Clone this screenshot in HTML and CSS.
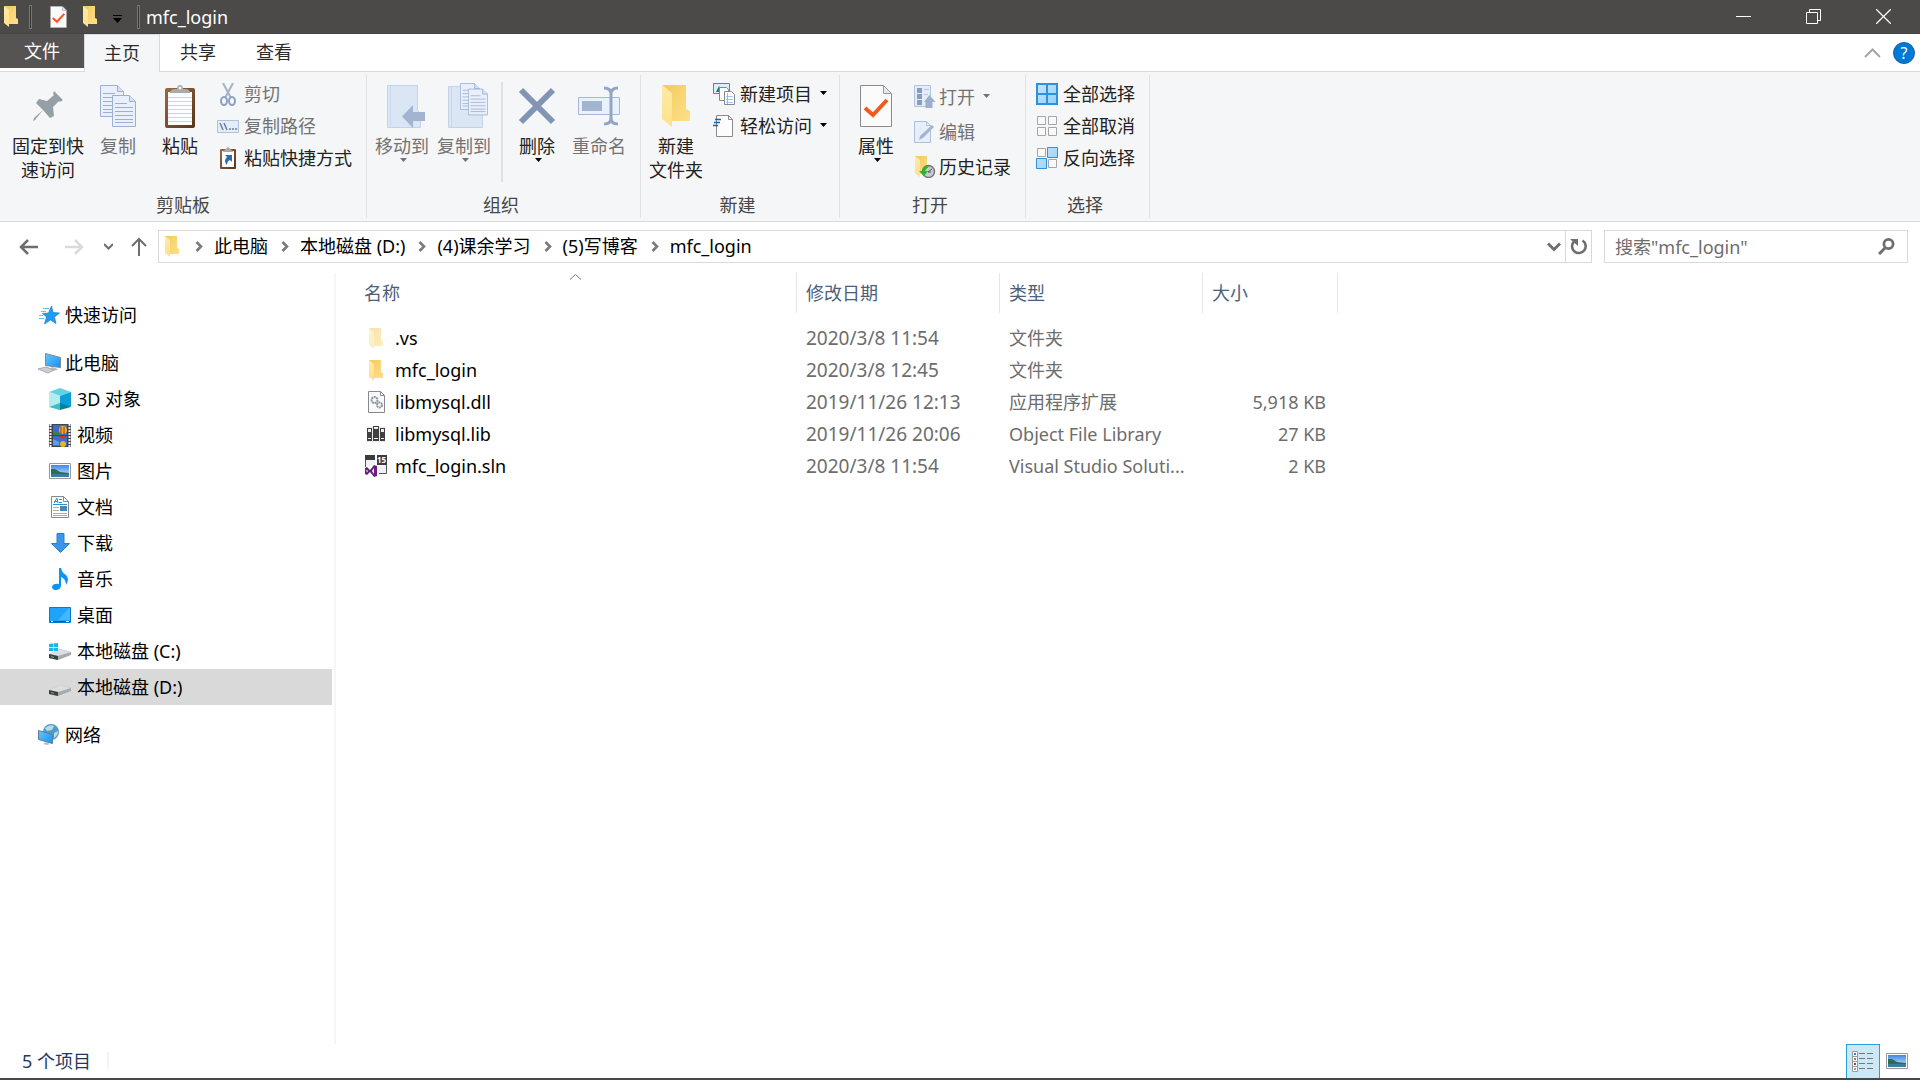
FILE: index.html
```html
<!DOCTYPE html>
<html lang="zh-CN">
<head>
<meta charset="utf-8">
<title>mfc_login</title>
<link rel="stylesheet" href="styles.css">
</head>
<body>
<svg class="defs" aria-hidden="true">
  <defs>
    <linearGradient id="gold" x1="0" y1="0" x2="1" y2="1"><stop offset="0" stop-color="#f0cb60"/><stop offset="1" stop-color="#ffe089"/></linearGradient>
    <linearGradient id="flap" x1="0" y1="0" x2="0" y2="1"><stop offset="0" stop-color="#ffe9a6"/><stop offset="1" stop-color="#ffe287"/></linearGradient>
    <linearGradient id="wood" x1="0" y1="0" x2="1" y2="1"><stop offset="0" stop-color="#9a6a3e"/><stop offset="1" stop-color="#59351a"/></linearGradient>
    <linearGradient id="sky" x1="0" y1="0" x2="0" y2="1"><stop offset="0" stop-color="#3f87e8"/><stop offset="1" stop-color="#d4ecf8"/></linearGradient>
    <linearGradient id="blue" x1="0" y1="0" x2="1" y2="1"><stop offset="0" stop-color="#6cc6ff"/><stop offset="1" stop-color="#0f93f5"/></linearGradient>
    <linearGradient id="cell" x1="0" y1="0" x2="1" y2="1"><stop offset="0" stop-color="#c5e6ff"/><stop offset="1" stop-color="#94d0fa"/></linearGradient>
  </defs>
  <symbol id="folder" viewBox="0 0 14 21"><path d="M0 0h12v12l2 1v5H4z" fill="url(#gold)"/><path d="M0 0l5 4v17l-5-4z" fill="url(#flap)"/></symbol>
  <symbol id="chev" viewBox="0 0 8 11"><path d="M1.500 1l4.500 4.500L1.500 10" fill="none" stroke="#7a7a7a" stroke-width="2.600"/></symbol>
  <symbol id="down" viewBox="0 0 7 4"><path d="M0 0h7L3.500 4z" fill="currentColor"/></symbol>
  <symbol id="check" viewBox="0 0 32 42"><path d="M.5.5h23l8 8v33H.5z" fill="#fbfbfb" stroke="#8a8a8a"/><path d="M23.500.5v8h8z" fill="#e6e6e6" stroke="#9a9a9a"/><path d="M5 23l8 7 14-15" fill="none" stroke="#f4591b" stroke-width="4"/></symbol>
  <symbol id="page" viewBox="0 0 24 32"><path d="M.5.5h17l6 6v25H.5z" fill="#e9f0fb" stroke="#9db0d3"/><path d="M17.500.5v6h6" fill="#d5e0f1" stroke="#9db0d3"/><path d="M3 8.500h12M3 12.500h18M3 16.500h18M3 20.500h18M3 24.500h18M3 27.500h18" stroke="#9fb0cf"/></symbol>
  <symbol id="photo" viewBox="0 0 22 16"><path d="M.5.5h21v15H.5z" fill="#fff" stroke="#999"/><path d="M2 2h18v12H2z" fill="url(#sky)"/><path d="M2 6l4 0 5 3 9 1v1H2z" fill="#2f6b51"/><path d="M2 11h18v3H2z" fill="#3d7ba0"/></symbol>
  <symbol id="drive" viewBox="0 0 22 11"><path d="M0 5L11 0l11 3v3L9 11 0 9z" fill="#a8a9ab"/><path d="M0 5L11 0l11 3-13 4z" fill="#dcdddf"/><path d="M0 5l9 2v4L0 9z" fill="#3d4043"/><path d="M2 7.500l3 1" stroke="#56c35b"/></symbol>
</svg>

<header class="titlebar">
  <svg class="t-folder" width="14" height="21"><use href="#folder"/></svg>
  <span class="t-sep"></span>
  <button class="plain t-check" aria-label="属性"><svg width="17" height="22"><use href="#check"/></svg></button>
  <button class="plain t-new" aria-label="新建文件夹"><svg width="14" height="21"><use href="#folder"/></svg></button>
  <button class="plain t-more" aria-label="自定义快速访问工具栏"><svg width="9" height="8"><path d="M0 .5h9" stroke="#000"/><path d="M0 3h9L4.500 8z" fill="#000"/></svg></button>
  <span class="t-sep"></span>
  <h1 class="title">mfc_login</h1>
  <button class="plain win" aria-label="最小化"><svg width="15" height="15"><path d="M0 7.500h15" stroke="#fff"/></svg></button>
  <button class="plain win" aria-label="还原"><svg width="15" height="15"><path d="M.5 3.500h11v11H.5zM3.500 3V.5h11v11H12" fill="none" stroke="#fff"/></svg></button>
  <button class="plain win" aria-label="关闭"><svg width="15" height="15"><path d="M0 0l15 15M15 0L0 15" stroke="#fff" stroke-width="1.300"/></svg></button>
</header>

<nav class="tabs">
  <button class="plain tab file">文件</button>
  <button class="plain tab active">主页</button>
  <button class="plain tab">共享</button>
  <button class="plain tab">查看</button>
  <span class="grow"></span>
  <button class="plain" aria-label="折叠功能区"><svg width="17" height="10"><path d="M1 9l7.500-7.500L16 9" fill="none" stroke="#a5a5a5" stroke-width="2"/></svg></button>
  <button class="plain help" aria-label="帮助">?</button>
</nav>

<section class="ribbon">
  <div class="group g-clip">
    <div class="tools">
      <button class="plain big w80"><span class="pic"><svg width="30" height="30"><path d="M21 0l9 9-3 2-1-1-6 6 1 9-4 2-7-8-8 10-2 1 1-3 9-8-7-7 3-4 8 2 7-6-1-1z" fill="#95a0a6"/></svg></span>固定到快<br>速访问</button>
      <button class="plain big w60 off"><span class="pic"><svg width="36" height="42"><use href="#page" width="24" height="32"/><use href="#page" x="12" y="10" width="24" height="32"/></svg></span>复制</button>
      <button class="plain big w64"><span class="pic"><svg width="30" height="43"><rect y="3" width="30" height="40" rx="2" fill="url(#wood)"/><path d="M3 7h24v33H3z" fill="#fbfdff"/><path d="M3 12.500h24M3 16.500h24M3 20.500h24M3 24.500h24M3 28.500h24M3 32.500h24M3 36.500h24" stroke="#b7ddf2"/><path d="M5 8q0-4 5-4h2q0-4 3-4t3 4h2q5 0 5 4z" fill="#aaa"/><circle cx="15" cy="3" r="1.500" fill="#eee"/></svg></span>粘贴</button>
      <div class="stack">
        <button class="plain small off"><span class="ico"><svg width="16" height="23"><path d="M3 0l8 15M13 0L5 15" stroke="#a3b1ca" stroke-width="2"/><ellipse cx="4" cy="18" rx="3" ry="4" fill="none" stroke="#8d9fc3" stroke-width="2"/><ellipse cx="12" cy="18" rx="3" ry="4" fill="none" stroke="#8d9fc3" stroke-width="2"/></svg></span>剪切</button>
        <button class="plain small off"><span class="ico"><svg width="22" height="13"><path d="M.5.5h21v12H.5z" fill="#e3ecf9" stroke="#afc0dd"/><path d="M3 3l3 7M7 3l3 7M12 9h2M15 9h2M18 9h2" stroke="#6c7f9d" stroke-width="1.500"/></svg></span>复制路径</button>
        <button class="plain small"><span class="ico"><svg width="16" height="22"><rect y="2" width="16" height="20" rx="1" fill="url(#wood)"/><path d="M2 4h12v16H2z" fill="#fff"/><path d="M3 5q1-2 3-3 2-4 4 0 2 1 3 3z" fill="#aaa"/><path d="M5 8h7v7l-2-2q-3 1-3 5-4-4 0-8z" fill="#2e69ac"/></svg></span>粘贴快捷方式</button>
      </div>
    </div>
    <h2>剪贴板</h2>
  </div>

  <div class="group g-org">
    <div class="tools">
      <button class="plain big w62 off"><span class="pic"><svg width="40" height="43"><path d="M1.500.5h30v25l3 3v14h-33z" fill="#dbe6f5" stroke="#c5d3ea"/><path d="M4.500 1v41" stroke="#c9d7ec"/><path d="M16 31.500L27 20v7h12v9H27v7z" fill="#a3b4d0"/></svg></span>移动到<svg class="drop" width="7" height="4"><use href="#down"/></svg></button>
      <button class="plain big w62 off"><span class="pic"><svg width="42" height="46"><path d="M1.500 3.500h28v24h6v17h-34z" fill="#dbe6f5" stroke="#c5d3ea"/><path d="M4.500 4v40" stroke="#c9d7ec"/><use href="#page" x="13" y="0" width="20" height="27"/><use href="#page" x="21" y="5" width="20" height="28"/></svg></span>复制到<svg class="drop" width="7" height="4"><use href="#down"/></svg></button>
      <span class="divider"></span>
      <button class="plain big w60"><span class="pic"><svg width="38" height="38"><path d="M3 3l32 32M35 3L3 35" stroke="#8295b5" stroke-width="6"/></svg></span>删除<svg class="drop" width="7" height="4"><use href="#down"/></svg></button>
      <button class="plain big w64 off"><span class="pic"><svg width="42" height="40"><path d="M.5 11.500h41v17H.5z" fill="#e9f1fc" stroke="#a7b9da"/><path d="M4 15h20v10H4z" fill="#a3b4d0"/><path d="M26 2q7 0 7 6 0-6 7-6M33 7v26M26 38q7 0 7-6 0 6 7 6" fill="none" stroke="#94a5c3" stroke-width="3"/></svg></span>重命名</button>
    </div>
    <h2>组织</h2>
  </div>

  <div class="group g-new">
    <div class="tools">
      <button class="plain big w62"><span class="pic"><svg width="28" height="42"><use href="#folder"/></svg></span>新建<br>文件夹</button>
      <div class="stack">
        <button class="plain small"><span class="ico"><svg width="22" height="22"><path d="M.5.5h16v10H.5z" fill="#d8f0fa" stroke="#438db0"/><path d="M3 9l3-6 3 6z" fill="#34705c"/><path d="M6.500 4.500h7l2 2v11h-9z" fill="#fff" stroke="#888"/><path d="M11.500 8.500h7l3 3v10h-10z" fill="#fff" stroke="#888"/><path d="M13 13.500h7M13 16.500h7M13 19.500h7" stroke="#a7c5ee"/><path d="M14.500 10v11" stroke="#f09c9c"/></svg></span>新建项目<svg class="side" width="7" height="4"><use href="#down"/></svg></button>
        <button class="plain small"><span class="ico"><svg width="22" height="23"><path d="M3.500.5h12l4 4v17h-16z" fill="#fcfcfc" stroke="#8a8a8a"/><path d="M15.500.5v4h4" fill="none" stroke="#8a8a8a"/><path d="M2 4.500h6M1 7.500h6M0 10.500h5" stroke="#1c62a8" stroke-width="1.500"/></svg></span>轻松访问<svg class="side" width="7" height="4"><use href="#down"/></svg></button>
      </div>
    </div>
    <h2>新建</h2>
  </div>

  <div class="group g-open">
    <div class="tools">
      <button class="plain big w62"><span class="pic"><svg width="32" height="42"><use href="#check"/></svg></span>属性<svg class="drop" width="7" height="4"><use href="#down"/></svg></button>
      <div class="stack tall">
        <button class="plain small off"><span class="ico"><svg width="22" height="23"><path d="M.5.5h16v21H.5z" fill="#e3ecf9" stroke="#b3c3de"/><path d="M3 3h5v5H3zM3 9h5v5H3zM3 15h5v5H3z" fill="#8a9bbb"/><path d="M10 4.500h5M10 9.500h4" stroke="#b9c8e0"/><path d="M15.500 10l6 7h-3v6h-7v-6H10z" fill="#9dafce"/></svg></span>打开<svg class="side" width="7" height="4"><use href="#down"/></svg></button>
        <button class="plain small off"><span class="ico"><svg width="22" height="22"><path d="M.5.5h12l4 4v17H.5z" fill="#e6eefa" stroke="#afc0dd"/><path d="M12.500.5v4h4" fill="none" stroke="#afc0dd"/><path d="M5 19l1-4L18 4l2 2L9 17z" fill="#a3b4d0"/></svg></span>编辑</button>
        <button class="plain small"><span class="ico"><svg width="22" height="22"><use href="#folder" x="1" width="14" height="21"/><circle cx="14.500" cy="15.500" r="6" fill="#c7cbcd" stroke="#777" stroke-width="1.500"/><path d="M14 16l4-3M14 16h3" stroke="#555"/><path d="M16 10q-7-1-8 5H5l5 5 4-5h-3q1-3 5-5z" fill="#2bb52b"/></svg></span>历史记录</button>
      </div>
    </div>
    <h2>打开</h2>
  </div>

  <div class="group g-sel">
    <div class="tools">
      <div class="stack">
        <button class="plain small"><span class="ico"><svg width="22" height="22"><path d="M1 1h20v20H1z" fill="url(#cell)" stroke="#2d91e0" stroke-width="2"/><path d="M11 0v22M0 11h22" stroke="#2d91e0" stroke-width="2"/></svg></span>全部选择</button>
        <button class="plain small"><span class="ico"><svg width="22" height="22"><path d="M1.500 1.500h8v8h-8zM12.500 1.500h8v8h-8zM1.500 12.500h8v8h-8zM12.500 12.500h8v8h-8z" fill="#fafafa" stroke="#a6a6a6"/></svg></span>全部取消</button>
        <button class="plain small"><span class="ico"><svg width="22" height="22"><path d="M1.500 1.500h8v8h-8zM12.500 12.500h8v8h-8z" fill="#fafafa" stroke="#a6a6a6"/><path d="M11.500.5h10v10h-10zM.5 11.500h10v10H.5z" fill="url(#cell)" stroke="#2d91e0"/></svg></span>反向选择</button>
      </div>
    </div>
    <h2>选择</h2>
  </div>
</section>

<div class="navbar">
  <div class="arrows">
    <button class="plain n-back" aria-label="后退"><svg width="19" height="16"><path d="M19 8H2M9 1L2 8l7 7" fill="none" stroke="#6e6e6e" stroke-width="2.500"/></svg></button>
    <button class="plain n-fwd" aria-label="前进"><svg width="19" height="16"><path d="M0 8h17M10 1l7 7-7 7" fill="none" stroke="#dadada" stroke-width="2.500"/></svg></button>
    <button class="plain n-hist" aria-label="最近浏览的位置"><svg width="9" height="7"><path d="M0 1l4.500 4.500L9 1" fill="none" stroke="#6e6e6e" stroke-width="2"/></svg></button>
    <button class="plain" aria-label="上移"><svg width="16" height="19"><path d="M8 19V2M1 9l7-7 7 7" fill="none" stroke="#6e6e6e" stroke-width="2"/></svg></button>
  </div>
  <div class="address">
    <svg class="a-folder" width="14" height="21"><use href="#folder"/></svg>
    <svg class="chev" width="8" height="11"><use href="#chev"/></svg><a href="#pc">此电脑</a>
    <svg class="chev" width="8" height="11"><use href="#chev"/></svg><a href="#d">本地磁盘 (D:)</a>
    <svg class="chev" width="8" height="11"><use href="#chev"/></svg><a href="#study">(4)课余学习</a>
    <svg class="chev" width="8" height="11"><use href="#chev"/></svg><a href="#blog">(5)写博客</a>
    <svg class="chev" width="8" height="11"><use href="#chev"/></svg><a href="#login">mfc_login</a>
    <span class="grow"></span>
    <button class="plain a-drop" aria-label="历史位置"><svg width="14" height="10"><path d="M1 1.500l6 6 6-6" fill="none" stroke="#6e6e6e" stroke-width="3"/></svg></button>
    <button class="plain a-ref" aria-label="刷新"><svg width="17" height="18"><path d="M12.500 2.500a6.800 6.800 0 1 1-8.500 1" fill="none" stroke="#6e6e6e" stroke-width="2.600"/><path d="M0 1h8v7z" fill="#6e6e6e"/></svg></button>
  </div>
  <form class="search">
    <input type="search" aria-label="搜索" placeholder='搜索"mfc_login"'>
    <button class="plain" type="button" aria-label="搜索"><svg width="17" height="17"><circle cx="10.500" cy="6" r="4.600" fill="none" stroke="#6e6e6e" stroke-width="2.800"/><path d="M7.500 9.500l-6.500 6.500" stroke="#6e6e6e" stroke-width="3"/></svg></button>
  </form>
</div>

<main class="body">
  <nav class="sidebar">
    <ul>
      <li><a href="#quick"><span class="ico"><svg width="22" height="18"><path d="M13.500 0l1.500 6.500 6.500.5-5 4 1.500 6.500-5.500-3.500-6 4 2-7-4-3.500 6-.5z" fill="#1f9bf2" stroke="#1c7fc8" stroke-width=".7"/><path d="M5 2.500h6M3 5.500h5M1 9.500h4M1 12.500h5" stroke="#6fbdec"/></svg></span>快速访问</a></li>
    </ul>
    <ul>
      <li><a href="#pc"><span class="ico"><svg width="23" height="21"><path d="M7.500.5l15 4v10l-15-2z" fill="url(#blue)" stroke="#7b8a93"/><path d="M14 14l4 1 2 2-6 1-4-1z" fill="#b9bdc1"/><path d="M0 16l8-2 8 3-6 3z" fill="#c9ced3" stroke="#a6adb3"/></svg></span>此电脑</a>
        <ul class="sub">
          <li><a href="#o3d"><span class="ico"><svg width="22" height="22"><path d="M0 4l11-4 11 4-11 4z" fill="#62d3e4"/><path d="M0 4l11 4v9L0 19z" fill="#b5ecee"/><path d="M22 4L11 8v9l11 2z" fill="#0b9ed8"/><path d="M0 19l11-4v7z" fill="#35bfc9"/><path d="M22 19l-11-4v7z" fill="#067f99"/></svg></span>3D 对象</a></li>
          <li><a href="#video"><span class="ico"><svg width="22" height="23"><path d="M0 0h22v23H0z" fill="#444"/><path d="M4 1h14v10H4zM4 12h14v10H4z" fill="#3c6dc8"/><path d="M1.500 0v23M20.500 0v23" stroke="#eee" stroke-width="2" stroke-dasharray="2 1"/><circle cx="14" cy="6" r="4" fill="#e8b423"/><path d="M12 3v7M15 3v7" stroke="#b2321d"/><path d="M4 9l4-2 3 3v1H4z" fill="#36843b"/><circle cx="14" cy="20" r="3" fill="#e8b423"/><path d="M9 12h9l-4 3z" fill="#c63a26"/><path d="M4 15l6 3v3H4z" fill="#5aa0e6"/></svg></span>视频</a></li>
          <li><a href="#pics"><span class="ico"><svg width="22" height="16"><use href="#photo"/></svg></span>图片</a></li>
          <li><a href="#docs"><span class="ico"><svg width="18" height="22"><path d="M.5.5h12l5 5v16H.5z" fill="#fff" stroke="#888"/><path d="M12.500.5v5h5" fill="none" stroke="#888"/><path d="M3 7l3-5 1 5M3 5.500h4M8 3.500h3M8 6.500h3M2 8.500h14" fill="none" stroke="#2a93d5"/><path d="M9 10h7v5H9z" fill="#4a86b8"/><path d="M2 11.500h6M2 14.500h6M2 17.500h14M2 19.500h14" stroke="#aaa"/></svg></span>文档</a></li>
          <li><a href="#down"><span class="ico"><svg width="19" height="20"><path d="M6 .5h7v10h5.500l-9 9-9-9H6z" fill="#3a96e8" stroke="#2b7fcc"/></svg></span>下载</a></li>
          <li><a href="#music"><span class="ico"><svg width="16" height="22"><path d="M7 0h2q1 5 5 7 4 4 0 10 0-6-5-8v9q-1 4-5 4-4 0-4-3 1-4 7-3z" fill="#0c95f0"/></svg></span>音乐</a></li>
          <li><a href="#desk"><span class="ico"><svg width="22" height="16"><path d="M.5.5h21v15H.5z" fill="#1ea4ff" stroke="#0c79c6"/><path d="M9 13L20 1h1v12z" fill="#48b5ff"/><path d="M1 14.500h20" stroke="#0b5d9b"/><path d="M2 14.500h2M17 14.500h3" stroke="#fff"/></svg></span>桌面</a></li>
          <li><a href="#c"><span class="ico"><svg width="22" height="17"><use href="#drive" y="6" width="22" height="11"/><path d="M0 1l4-.5V4H0zM4.500.5L9 0v4H4.500zM0 4.700h4V8H0zM4.500 4.700H9V8H4.500z" fill="#19b5ef"/></svg></span>本地磁盘 (C:)</a></li>
          <li><a class="current" href="#d"><span class="ico"><svg width="22" height="17"><use href="#drive" y="6" width="22" height="11"/></svg></span>本地磁盘 (D:)</a></li>
        </ul>
      </li>
    </ul>
    <ul>
      <li><a href="#net"><span class="ico"><svg width="22" height="22"><circle cx="13" cy="8" r="8" fill="#4e9cc4"/><path d="M7 4q5-4 9-2l-2 4-5 1zM16 9l4-2q0 5-4 7z" fill="#b8dced"/><path d="M.5 6.500l14 4v9l-14-4z" fill="url(#blue)" stroke="#5f7f94"/><path d="M5 20l3-2 4 2-3 1z" fill="#b7bbbf"/></svg></span>网络</a></li>
    </ul>
  </nav>

  <section class="files">
    <table>
      <colgroup><col class="c-name"><col class="c-mid"><col class="c-mid"><col class="c-size"></colgroup>
      <thead><tr><th>名称<svg class="sort" width="11" height="6"><path d="M0 5.500L5.500.5l5.500 5" fill="none" stroke="#777"/></svg></th><th>修改日期</th><th>类型</th><th>大小</th></tr></thead>
      <tbody>
        <tr><td><div class="name"><span class="ico"><svg class="faded" width="14" height="21"><use href="#folder"/></svg></span>.vs</div></td><td class="date">2020/3/8 11:54</td><td>文件夹</td><td></td></tr>
        <tr><td><div class="name"><span class="ico"><svg width="14" height="21"><use href="#folder"/></svg></span>mfc_login</div></td><td class="date">2020/3/8 12:45</td><td>文件夹</td><td></td></tr>
        <tr><td><div class="name"><span class="ico"><svg width="17" height="22"><path d="M.5.5h12l4 4v17H.5z" fill="#fafafa" stroke="#888"/><path d="M12.500.5v4h4" fill="none" stroke="#888"/><circle cx="6.500" cy="9" r="3" fill="none" stroke="#8797a5" stroke-width="2" stroke-dasharray="2 .6"/><circle cx="11.500" cy="14" r="2.500" fill="none" stroke="#8797a5" stroke-width="2" stroke-dasharray="2 .6"/></svg></span>libmysql.dll</div></td><td class="date">2019/11/26 12:13</td><td>应用程序扩展</td><td>5,918 KB</td></tr>
        <tr><td><div class="name"><span class="ico"><svg width="18" height="16"><path d="M0 1h18v15H0z" fill="#ececec"/><path d="M0 2h5v13H0zM6 0h6v15H6zM13 2h5v13h-5z" fill="#404040"/><path d="M1 3h3v3H1zM7 1h4v2H7zM14 3h3v3h-3zM1 12h3v1H1zM7 12h4v1H7zM14 12h3v1h-3z" fill="#ececec"/></svg></span>libmysql.lib</div></td><td class="date">2019/11/26 20:06</td><td>Object File Library</td><td>27 KB</td></tr>
        <tr><td><div class="name"><span class="ico"><svg width="22" height="22"><path d="M.5 4v8M14 18.500h7.500V10" fill="none" stroke="#555"/><path d="M1 5h9v6H1zM12 11h9v7h-9z" fill="#f1f1f1"/><path d="M0 0h10v5H0zM12 0h10v10H12z" fill="#3c3c3c"/><text x="12" y="8" class="badge">15</text><path d="M0 13l2-1 3 3 4-5 3 1v10l-3 1-4-5-3 3-2-1zM9 13l-2 3 2 3zM1.500 14.500v3l1.500-1.500z" fill="#68217a" fill-rule="evenodd"/></svg></span>mfc_login.sln</div></td><td class="date">2020/3/8 11:54</td><td>Visual Studio Soluti...</td><td>2 KB</td></tr>
      </tbody>
    </table>
  </section>
</main>

<footer class="status">
  <span class="count">5 个项目</span>
  <span class="grow"></span>
  <button class="plain view on" aria-label="详细信息"><svg width="22" height="21"><path d="M.5.5h5v20h-5zM.5 5.500h5M.5 10.500h5M.5 15.500h5" fill="#fff" stroke="#999"/><path d="M2 2h2v2H2z" fill="#3a80c4"/><path d="M2 7h2v2H2z" fill="#8a8a35"/><path d="M2 12h2v2H2z" fill="#c2331f"/><path d="M2 17h2v2H2z" fill="#88a39a"/><path d="M7 2.500h6M15 2.500h6M7 7.500h6M15 7.500h6M7 12.500h6M15 12.500h6M7 17.500h6M15 17.500h6" stroke="#777"/></svg></button>
  <button class="plain view" aria-label="缩略图"><svg width="22" height="16"><use href="#photo"/></svg></button>
</footer>
</body>
</html>
```
FILE: styles.css
```css
* { box-sizing: border-box; }
body {
  margin: 0;
  min-height: 100vh;
  display: flex;
  flex-direction: column;
  background: #fff;
  border-bottom: 2px solid #474749;
  color: #000;
  font: 18px/24px "Noto Sans", "Noto Sans CJK SC", sans-serif;
}
svg { display: block; flex: none; }
.defs { position: absolute; width: 0; height: 0; }
.plain {
  border: 0;
  padding: 0;
  background: none;
  color: inherit;
  font: inherit;
  display: flex;
  align-items: center;
  flex: none;
}
.grow { flex: 1; }
ul { list-style: none; margin: 0; padding: 0; }
a { color: inherit; text-decoration: none; }
h1, h2 { margin: 0; font: inherit; }

/* title bar */
.titlebar {
  height: 34px;
  padding: 0 2px 0 4px;
  display: flex;
  align-items: center;
  background: #4b4a48;
  border-bottom: 1px solid #444346;
  color: #fff;
}
.t-sep { width: 3px; height: 24px; border: 1px solid #777; background: #333; margin-left: 11px; }
.t-check { margin-left: 18px; }
.t-new { margin-left: 16px; }
.t-more { margin-left: 16px; padding-top: 5px; }
.t-more + .t-sep { margin-left: 15px; }
.title { flex: 1; margin-left: 6px; }
.win { width: 70px; height: 33px; justify-content: center; }

/* ribbon tabs */
.tabs {
  height: 38px;
  padding-right: 5px;
  display: flex;
  align-items: center;
  border-bottom: 1px solid #d9dadb;
}
.tab { width: 76px; height: 37px; padding-bottom: 2px; justify-content: center; color: #2b2b2b; }
.tab.file { width: 84px; height: 34px; padding-bottom: 0; align-self: flex-start; background: #565452; color: #fff; }
.tab.active {
  height: 38px;
  align-self: flex-start;
  background: #f5f6f7;
  border: 1px solid #d9dadb;
  border-bottom: 0;
}
.help {
  width: 22px;
  height: 22px;
  margin-left: 12px;
  justify-content: center;
  border: 1px solid #0a62ab;
  border-radius: 50%;
  background: #0078d7;
  color: #fff;
  font-size: 16px;
}

/* ribbon */
.ribbon {
  display: flex;
  padding: 3px 0;
  background: #f5f6f7;
  border-bottom: 1px solid #d9dadb;
}
.group { display: flex; flex-direction: column; border-right: 1px solid #e1e2e4; }
.group h2 { text-align: center; color: #464646; padding: 0 5px 1px 0; }
.group.g-clip h2 { padding-right: 0; }
.tools { display: flex; height: 118px; }
.g-clip { width: 367px; }
.g-clip .tools { padding-left: 8px; }
.g-org { width: 274px; }
.g-org .tools { padding-left: 4px; }
.g-new { width: 199px; }
.g-new .tools { padding-left: 4px; }
.g-open { width: 186px; }
.g-open .tools { padding-left: 5px; }
.g-sel { width: 124px; }
.g-sel .tools { padding-left: 5px; }
.big { flex-direction: column; padding-top: 6px; color: #222; text-align: center; white-space: nowrap; }
.pic { height: 50px; margin-bottom: 3px; display: flex; align-items: center; }
.g-org .w62 .pic { padding-left: 8px; }
.w60 { width: 60px; }
.w62 { width: 62px; }
.w64 { width: 64px; }
.w80 { width: 80px; }
.small { height: 32px; color: #222; }
.drop, .side { color: #000; }
.drop { margin-left: 3px; }
.off, .off .drop, .off .side { color: #737373; }
.side { margin: 0 0 2px 8px; }
.divider { width: 2px; height: 100px; margin: 7px 4px 0 6px; background: #dfe0e3; }
.stack { padding: 3px 0 0 5px; }
.g-new .stack { padding-left: 6px; }
.stack.tall { padding: 4px 0 0 7px; }
.tall .small { height: 35px; }
.ico { width: 22px; display: flex; justify-content: center; flex: none; }
.small .ico { margin-right: 5px; }
.tall .small .ico { margin-right: 3px; }

/* address row */
.navbar { display: flex; padding: 8px 12px 10px 0; height: 51px; }
.arrows { width: 158px; padding-left: 19px; display: flex; align-items: center; flex: none; }
.n-fwd { margin-left: 27px; }
.n-hist { margin: 0 18px 0 20px; }
.address { flex: 1; display: flex; align-items: center; border: 1px solid #d9d9d9; padding-left: 6px; }
.address a { padding-bottom: 1px; }
.a-folder { margin-right: 3px; }
.chev { margin: 0 11px 0 13px; }
.a-drop { width: 30px; padding-left: 12px; }
.a-ref { width: 26px; align-self: stretch; justify-content: center; border-left: 1px solid #d9d9d9; }
.search { width: 304px; margin-left: 12px; padding: 0 12px 0 10px; display: flex; border: 1px solid #d9d9d9; }
.search input { flex: 1; min-width: 0; border: 0; padding: 0; outline: 0; background: none; font: inherit; }
.search input::placeholder { color: #6d6d6d; opacity: 1; }

/* panes */
.body { flex: 1; display: flex; }
.sidebar { width: 336px; padding: 24px 2px 0 0; border-right: 2px solid #f6f6f6; flex: none; }
.sidebar > ul { margin-bottom: 12px; }
.sidebar a { display: flex; align-items: center; height: 36px; padding-left: 38px; gap: 5px; }
.sidebar .sub a { padding-left: 49px; gap: 6px; }
.sidebar .sub .current { background: #d9d9d9; }
.files { flex: 1; min-width: 0; }
table { width: 1002px; table-layout: fixed; border-collapse: separate; border-spacing: 0; }
.c-name { width: 461px; }
.c-mid { width: 203px; }
.c-size { width: 135px; }
th {
  position: relative;
  height: 40px;
  padding: 0 0 0 9px;
  border-right: 1px solid #e5e5e5;
  color: #4c607a;
  font-weight: 400;
  text-align: left;
}
th:first-child { padding-left: 28px; }
.sort { position: absolute; top: 1px; left: 50%; margin-left: 4px; }
tbody::before { content: ""; display: block; height: 9px; }
td { height: 32px; padding: 0 0 0 9px; color: #6d6d6d; white-space: nowrap; }
td:first-child { padding-left: 29px; color: #000; }
td:last-child { padding-right: 12px; text-align: right; }
.date { font-size: 19px; }
.name { display: flex; align-items: center; gap: 8px; }
.faded { opacity: .55; }
.badge { font: 700 8px/8px "Noto Sans", sans-serif; fill: #fff; }

/* status bar */
.status { height: 34px; padding-right: 6px; display: flex; align-items: center; color: #1e395b; }
.count { padding: 0 16px 0 22px; line-height: 18px; border-right: 2px solid #f4f4f4; }
.view { width: 34px; height: 34px; justify-content: center; }
.view.on { background: #cce8f6; border: 1px solid #26a0da; border-bottom: 0; }
```
